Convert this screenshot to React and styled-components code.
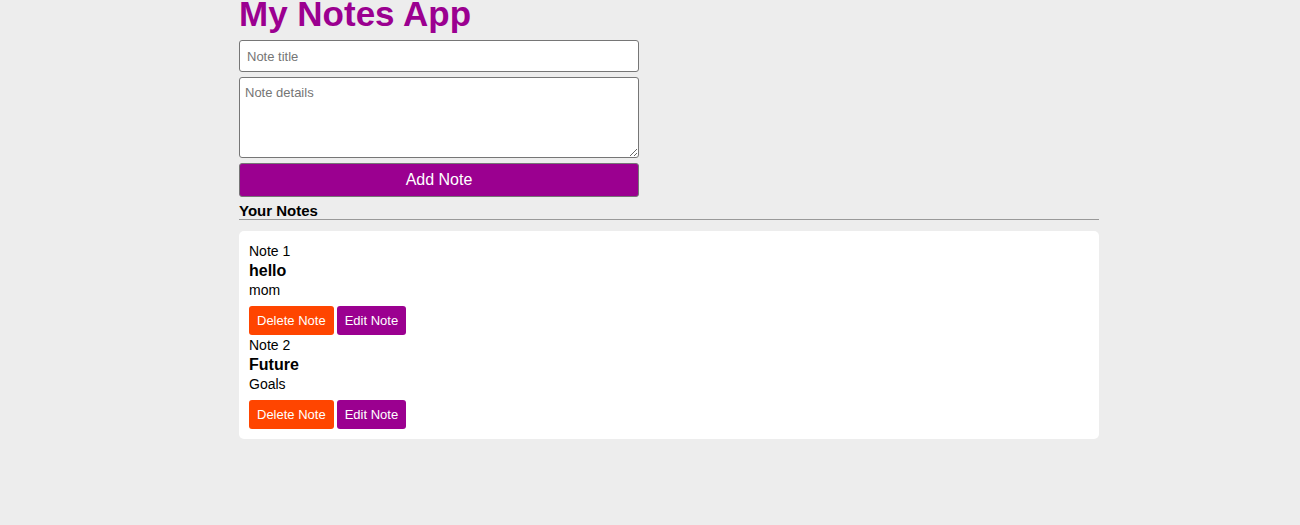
import React, { useState } from 'react'
import styled, { createGlobalStyle } from 'styled-components'

const GlobalStyle = createGlobalStyle`
  body {
    margin: 0;
    background: #ededed;
    font-family: "Liberation Sans", Arial, sans-serif;
    color: #000;
  }
`

const Page = styled.div`
  width: 860px;
  margin-left: 239px;
`
const Title = styled.h1`
  margin: -4px 0 8px;
  font-size: 35px;
  line-height: 36px;
  font-weight: bold;
  color: #9b0090;
`
const Form = styled.form`
  display: flex;
  flex-direction: column;
  gap: 5px;
  width: 400px;
`
const field = `
  box-sizing: border-box;
  width: 100%;
  border: 1px solid #767676;
  border-radius: 3px;
  background: #fff;
  font-family: "Liberation Sans", Arial, sans-serif;
  font-size: 13px;
  color: #000;
  &::placeholder { color: #757575; }
`
const TitleInput = styled.input`
  ${field}
  height: 32px;
  padding: 0 7px;
`
const DetailsInput = styled.textarea`
  ${field}
  height: 81px;
  padding: 7px 5px;
  resize: vertical;
  display: block;
  margin: 0;
`
const AddButton = styled.button`
  height: 34px;
  border: 1px solid #767676;
  border-radius: 3px;
  background: #9b0090;
  color: #fff;
  font-family: "Liberation Sans", Arial, sans-serif;
  font-size: 16px;
  cursor: pointer;
`
const SectionHeading = styled.h3`
  margin: 5px 0 11px;
  font-size: 15px;
  line-height: 17px;
  font-weight: bold;
  border-bottom: 1px solid #999;
`
const Card = styled.div`
  background: #fff;
  border-radius: 5px;
  padding: 10px;
`
const Label = styled.div`
  font-size: 14px;
  line-height: 20px;
`
const NoteTitle = styled.div`
  font-size: 16px;
  font-weight: bold;
  line-height: 18px;
  padding: 1px 0 0;
`
const NoteBody = styled.div`
  font-size: 14px;
  line-height: 20px;
  padding-bottom: 1px;
`
const Actions = styled.div`
  display: flex;
  gap: 3px;
  margin-top: 5px;
`
const ActionButton = styled.button`
  height: 29px;
  padding: 0 8px;
  border: none;
  border-radius: 3px;
  background: ${({ $danger }) => ($danger ? '#ff4500' : '#9b0090')};
  color: #fff;
  font-family: "Liberation Sans", Arial, sans-serif;
  font-size: 13px;
  cursor: pointer;
`

const initialNotes = [
  { id: 1, title: 'hello', body: 'mom' },
  { id: 2, title: 'Future', body: 'Goals' }
]

export default function App() {
  const [notes, setNotes] = useState(initialNotes)
  const [title, setTitle] = useState('')
  const [details, setDetails] = useState('')

  const addNote = (e) => {
    e.preventDefault()
    if (!title) return
    setNotes((n) => [...n, { id: Date.now(), title, body: details }])
    setTitle('')
    setDetails('')
  }

  return (
    <Page>
      <GlobalStyle />
      <Title>My Notes App</Title>
      <Form onSubmit={addNote}>
        <TitleInput
          placeholder="Note title"
          value={title}
          onChange={(e) => setTitle(e.target.value)}
        />
        <DetailsInput
          placeholder="Note details"
          value={details}
          onChange={(e) => setDetails(e.target.value)}
        />
        <AddButton type="submit">Add Note</AddButton>
      </Form>
      <SectionHeading>Your Notes</SectionHeading>
      <Card>
        {notes.map((note, i) => (
          <div key={note.id}>
            <Label>Note {i + 1}</Label>
            <NoteTitle>{note.title}</NoteTitle>
            <NoteBody>{note.body}</NoteBody>
            <Actions>
              <ActionButton
                $danger
                onClick={() => setNotes((n) => n.filter((x) => x.id !== note.id))}
              >
                Delete Note
              </ActionButton>
              <ActionButton>Edit Note</ActionButton>
            </Actions>
          </div>
        ))}
      </Card>
    </Page>
  )
}
